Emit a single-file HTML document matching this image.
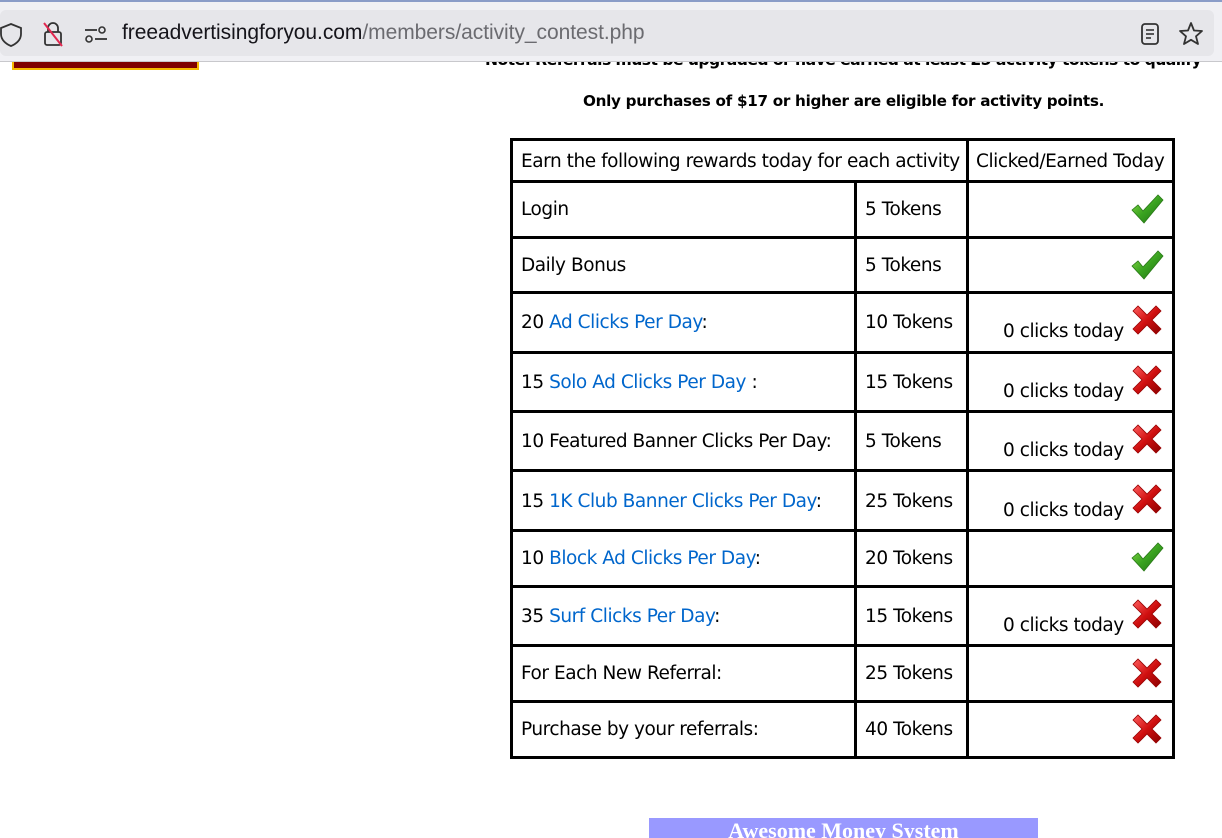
<!DOCTYPE html>
<html><head><meta charset="utf-8"><style>
*{margin:0;padding:0;box-sizing:border-box}
body{width:1222px;height:835px;overflow:hidden;background:#fff;position:relative;font-family:"DejaVu Sans","Liberation Sans",sans-serif;color:#000}
.bar{position:absolute;left:0;top:0;width:1222px;height:62px;background:#f0f0f4;border-top:2px solid #8a9cc8;border-bottom:1px solid #c8c8cc;z-index:5}
.url{position:absolute;left:0;top:8px;width:1214px;height:46px;background:#e6e6ea;border-radius:6px}
.ut{position:absolute;left:122px;top:19px;font-family:"Liberation Sans",sans-serif;font-size:21px;color:#15141a;letter-spacing:-0.05px}
.ut span{color:#6b6b70}
.a{position:absolute;white-space:nowrap}
.h{position:absolute;background:#000;height:3px}
.v{position:absolute;background:#000;width:3px}
.t{position:absolute;font-size:18.5px;line-height:22px;white-space:nowrap;font-family:"DejaVu Sans",sans-serif;letter-spacing:-0.45px}
.l{color:#0066cc}
.ic{position:absolute;width:34px;height:34px}
</style></head><body>
<div class="bar">
 <div class="url"></div>
 <svg style="position:absolute;left:0;top:20px" width="24" height="26" viewBox="0 0 24 26"><path d="M11 2 L21 6 V12 C21 18 16 22 11 24 C6 22 1 18 1 12 V6 Z" fill="none" stroke="#333" stroke-width="1.8"/></svg>
 <svg style="position:absolute;left:40px;top:18px" width="26" height="28" viewBox="0 0 26 28"><path d="M8 12 V8 a5 5 0 0 1 10 0 V12" fill="none" stroke="#333" stroke-width="1.8"/><rect x="5" y="12" width="16" height="13" rx="2" fill="none" stroke="#333" stroke-width="1.8"/><line x1="4" y1="3" x2="22" y2="26" stroke="#e22850" stroke-width="2"/></svg>
 <svg style="position:absolute;left:84px;top:24px" width="24" height="18" viewBox="0 0 24 18"><line x1="1" y1="4" x2="13" y2="4" stroke="#333" stroke-width="1.8"/><circle cx="18" cy="4" r="3" fill="none" stroke="#333" stroke-width="1.6"/><line x1="11" y1="13" x2="23" y2="13" stroke="#333" stroke-width="1.8"/><circle cx="5" cy="13" r="3" fill="none" stroke="#333" stroke-width="1.6"/></svg>
 <div class="ut">freeadvertisingforyou.com<span>/members/activity_contest.php</span></div>
 <svg style="position:absolute;left:1139px;top:20px" width="22" height="24" viewBox="0 0 22 24"><rect x="3" y="2" width="16" height="20" rx="3" fill="none" stroke="#333" stroke-width="1.8"/><line x1="7" y1="8" x2="15" y2="8" stroke="#333" stroke-width="1.6"/><line x1="7" y1="12" x2="15" y2="12" stroke="#333" stroke-width="1.6"/><line x1="7" y1="16" x2="12" y2="16" stroke="#333" stroke-width="1.6"/></svg>
 <svg style="position:absolute;left:1177px;top:18px" width="28" height="28" viewBox="0 0 28 28"><path d="M14 3 L17 10.5 L25 11 L19 16.3 L21 24 L14 19.8 L7 24 L9 16.3 L3 11 L11 10.5 Z" fill="none" stroke="#333" stroke-width="1.8" stroke-linejoin="round"/></svg>
</div>
<div style="position:absolute;left:12px;top:58px;width:187px;height:12px;background:#800000;border:2px solid #f5b800;border-top:none"></div>
<div class="a" style="left:485px;top:51px;font-size:15.6px;font-weight:bold;letter-spacing:-0.55px">Note: Referrals must be upgraded or have earned at least 25 activity tokens to qualify</div>
<div class="a" style="left:583px;top:92px;font-size:15.2px;font-weight:bold;letter-spacing:-0.3px">Only purchases of $17 or higher are eligible for activity points.</div>

<div class="h" style="left:510px;top:138px;width:665px"></div>
<div class="h" style="left:510px;top:180px;width:665px"></div>
<div class="h" style="left:510px;top:236px;width:665px"></div>
<div class="h" style="left:510px;top:291px;width:665px"></div>
<div class="h" style="left:510px;top:351px;width:665px"></div>
<div class="h" style="left:510px;top:410px;width:665px"></div>
<div class="h" style="left:510px;top:469px;width:665px"></div>
<div class="h" style="left:510px;top:529px;width:665px"></div>
<div class="h" style="left:510px;top:585px;width:665px"></div>
<div class="h" style="left:510px;top:644px;width:665px"></div>
<div class="h" style="left:510px;top:700px;width:665px"></div>
<div class="h" style="left:510px;top:756px;width:665px"></div>
<div class="v" style="left:510px;top:138px;height:621px"></div>
<div class="v" style="left:1172px;top:138px;height:621px"></div>
<div class="v" style="left:966px;top:138px;height:621px"></div>
<div class="v" style="left:854px;top:180px;height:579px"></div>

<svg width="0" height="0" style="position:absolute"><defs>
<linearGradient id="g" x1="0" y1="0" x2="1" y2="1"><stop offset="0" stop-color="#8fe04a"/><stop offset="0.5" stop-color="#3aa320"/><stop offset="1" stop-color="#1d6e12"/></linearGradient>
<linearGradient id="r" x1="0" y1="0" x2="1" y2="1"><stop offset="0" stop-color="#ff6060"/><stop offset="0.5" stop-color="#d01010"/><stop offset="1" stop-color="#8a0000"/></linearGradient>
<symbol id="ck" viewBox="0 0 34 34"><path d="M2 18 L8 13 L13 19 L28 3 L33 8 L14 31 Z" fill="url(#g)" stroke="#2a7a18" stroke-width="0.8"/></symbol>
<symbol id="x" viewBox="0 0 34 34"><path d="M3 8 L8 3 L17 12 L26 3 L31 8 L22 17 L31 26 L26 31 L17 22 L8 31 L3 26 L12 17 Z" fill="url(#r)" stroke="#900" stroke-width="0.8"/></symbol>
</defs></svg>

<div class="t" style="left:521px;top:151px">Earn the following rewards today for each activity</div>
<div class="t" style="left:976px;top:151px">Clicked/Earned Today</div>

<div class="t" style="left:521px;top:199px">Login</div><div class="t" style="left:865px;top:199px">5 Tokens</div>
<svg class="ic" style="left:1130px;top:192px"><use href="#ck"/></svg>
<div class="t" style="left:521px;top:255px">Daily Bonus</div><div class="t" style="left:865px;top:255px">5 Tokens</div>
<svg class="ic" style="left:1130px;top:248px"><use href="#ck"/></svg>

<div class="t" style="left:521px;top:312px">20 <span class="l">Ad Clicks Per Day</span>:</div><div class="t" style="left:865px;top:312px">10 Tokens</div>
<div class="t" style="left:1003px;top:321px">0 clicks today</div><svg class="ic" style="left:1130px;top:303px"><use href="#x"/></svg>

<div class="t" style="left:521px;top:372px">15 <span class="l">Solo Ad Clicks Per Day</span> :</div><div class="t" style="left:865px;top:372px">15 Tokens</div>
<div class="t" style="left:1003px;top:381px">0 clicks today</div><svg class="ic" style="left:1130px;top:363px"><use href="#x"/></svg>

<div class="t" style="left:521px;top:431px">10 Featured Banner Clicks Per Day:</div><div class="t" style="left:865px;top:431px">5 Tokens</div>
<div class="t" style="left:1003px;top:440px">0 clicks today</div><svg class="ic" style="left:1130px;top:422px"><use href="#x"/></svg>

<div class="t" style="left:521px;top:491px">15 <span class="l">1K Club Banner Clicks Per Day</span>:</div><div class="t" style="left:865px;top:491px">25 Tokens</div>
<div class="t" style="left:1003px;top:500px">0 clicks today</div><svg class="ic" style="left:1130px;top:482px"><use href="#x"/></svg>

<div class="t" style="left:521px;top:548px">10 <span class="l">Block Ad Clicks Per Day</span>:</div><div class="t" style="left:865px;top:548px">20 Tokens</div>
<svg class="ic" style="left:1130px;top:540px"><use href="#ck"/></svg>

<div class="t" style="left:521px;top:606px">35 <span class="l">Surf Clicks Per Day</span>:</div><div class="t" style="left:865px;top:606px">15 Tokens</div>
<div class="t" style="left:1003px;top:615px">0 clicks today</div><svg class="ic" style="left:1130px;top:597px"><use href="#x"/></svg>

<div class="t" style="left:521px;top:663px">For Each New Referral:</div><div class="t" style="left:865px;top:663px">25 Tokens</div>
<svg class="ic" style="left:1130px;top:656px"><use href="#x"/></svg>

<div class="t" style="left:521px;top:719px">Purchase by your referrals:</div><div class="t" style="left:865px;top:719px">40 Tokens</div>
<svg class="ic" style="left:1130px;top:712px"><use href="#x"/></svg>

<div style="position:absolute;left:649px;top:818px;width:389px;height:20px;background:#9999ff;overflow:hidden;text-align:center">
<div style="font-family:'Liberation Serif',serif;font-weight:bold;font-size:22px;color:#fff;line-height:24px;margin-top:1px">Awesome Money System</div></div>
</body></html>
